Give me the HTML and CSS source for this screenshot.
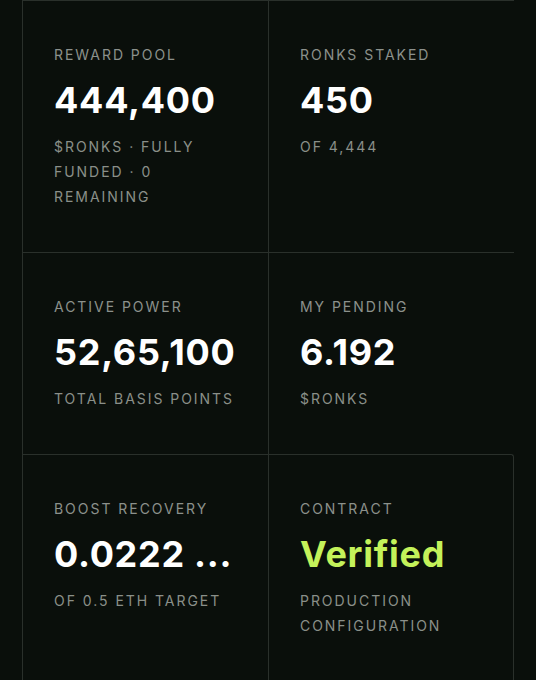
FILE: index.html
```html
<!DOCTYPE html>
<html lang="en">
<head>
    <meta charset="UTF-8">
    <meta name="viewport" content="width=device-width, initial-scale=1.0">
    <title>Staking Stats</title>
    <link rel="stylesheet" href="styles.css">
</head>
<body>
    <div class="stats">
        <div class="stat">
            <div class="stat-label">Reward Pool</div>
            <div class="stat-value">444,400</div>
            <div class="stat-sub">$RONKS · Fully funded · 0 remaining</div>
        </div>
        <div class="stat">
            <div class="stat-label">Ronks Staked</div>
            <div class="stat-value">450</div>
            <div class="stat-sub">of 4,444</div>
        </div>
        <div class="stat">
            <div class="stat-label">Active Power</div>
            <div class="stat-value">52,65,100</div>
            <div class="stat-sub">Total basis points</div>
        </div>
        <div class="stat">
            <div class="stat-label">My Pending</div>
            <div class="stat-value">6.192</div>
            <div class="stat-sub">$RONKS</div>
        </div>
        <div class="stat">
            <div class="stat-label">Boost Recovery</div>
            <div class="stat-value">0.0222 ...</div>
            <div class="stat-sub">of 0.5 ETH target</div>
        </div>
        <div class="stat last">
            <div class="stat-label">Contract</div>
            <div class="stat-value verified">Verified</div>
            <div class="stat-sub">Production configuration</div>
        </div>
    </div>
</body>
</html>
```

FILE: styles.css
```css
body {
    font-family: Inter, "Noto Sans", sans-serif;
    background-color: #0a0f0b;
    color: #fff;
    margin: 0;
    padding: 0;
}
.stats {
    display: grid;
    grid-template-columns: 246px 246px;
    margin-left: 22px;
    width: 492px;
}
.stat {
    border-top: 1px solid #2a302b;
    border-left: 1px solid #2a302b;
    padding: 44px 30px 43px 31px;
}
.stat.last {
    border-right: 1px solid #2a302b;
    border-top-right-radius: 3px;
}
.stat-label {
    font-size: 14px;
    line-height: 20px;
    letter-spacing: 0.14em;
    text-transform: uppercase;
    color: #8c918c;
}
.stat-value {
    font-size: 36px;
    line-height: 42px;
    font-weight: 700;
    letter-spacing: 0.02em;
    margin-top: 14px;
    white-space: nowrap;
}
.stat-value.verified {
    color: #c4f25a;
}
.stat-sub {
    font-size: 14px;
    line-height: 25px;
    letter-spacing: 0.14em;
    text-transform: uppercase;
    color: #8a8f89;
    margin-top: 13px;
}
```
